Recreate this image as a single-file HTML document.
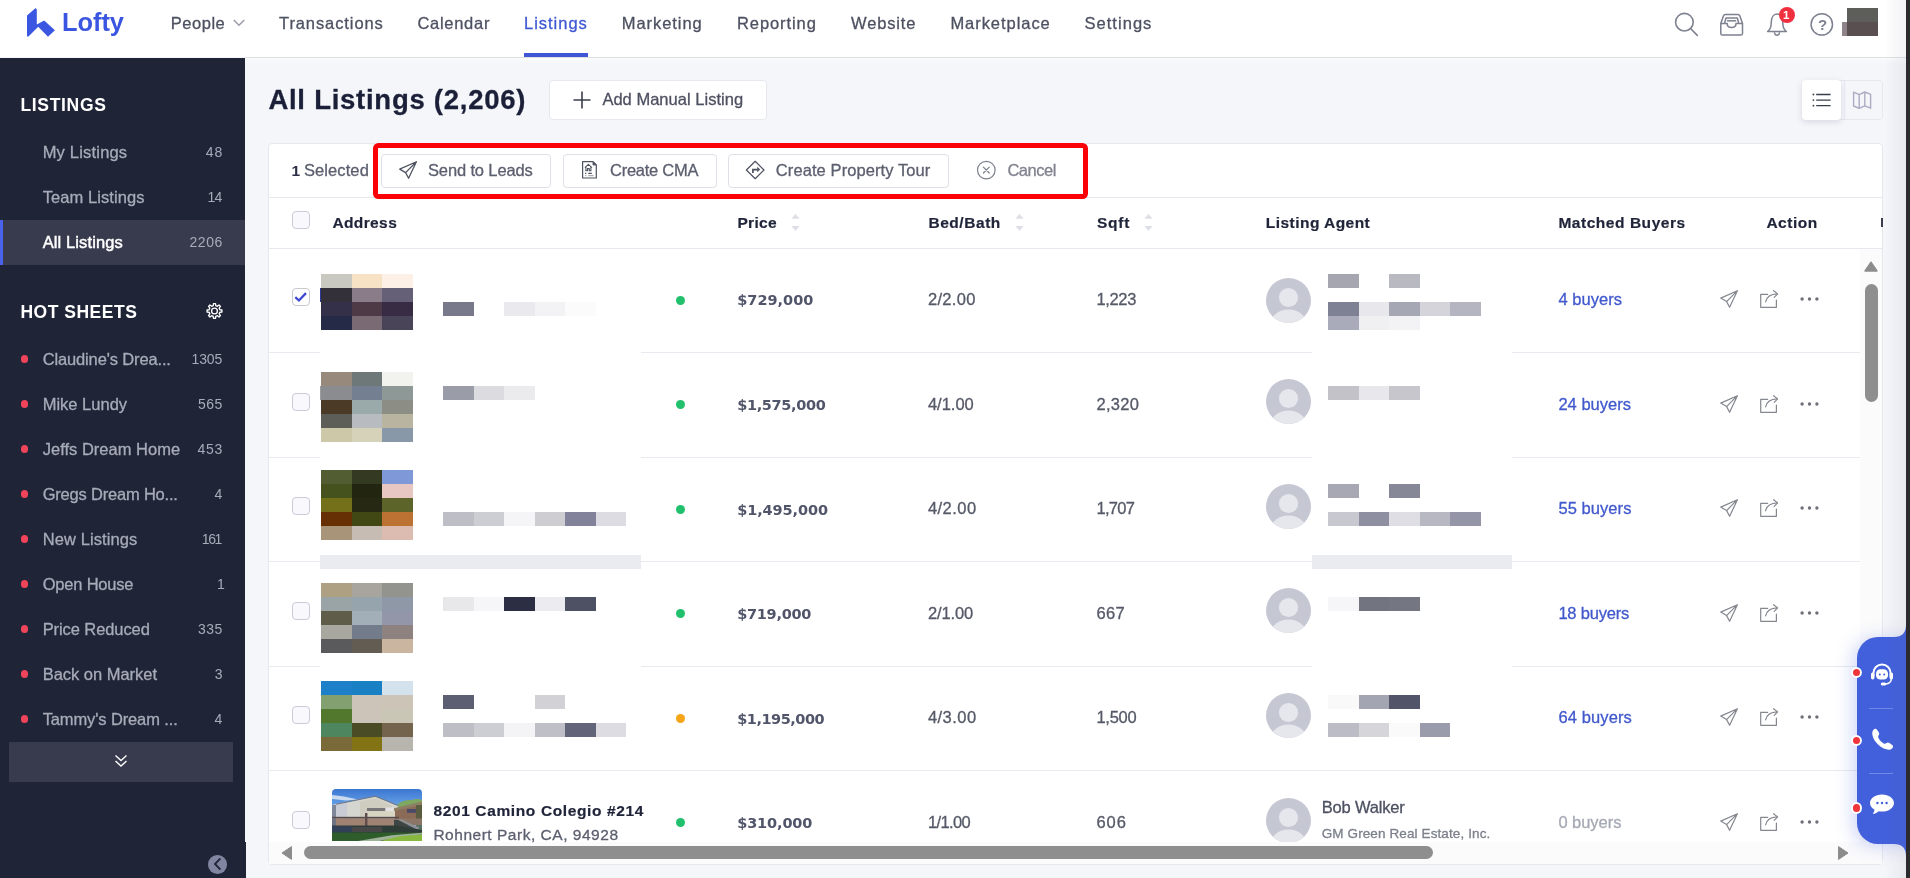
<!DOCTYPE html>
<html lang="en">
<head>
<meta charset="utf-8">
<title>Lofty - All Listings</title>
<style>
html,body{margin:0;padding:0}
body{width:1910px;height:878px;overflow:hidden;background:#f5f6fa;font-family:"Liberation Sans",sans-serif;position:relative}
#p{position:absolute;left:0;top:0;width:1910px;height:878px;overflow:hidden;will-change:transform}
#p>*,.abs{position:absolute}
.t{position:absolute;white-space:nowrap;line-height:1;font-weight:400}
.sw{-webkit-text-stroke:0.3px currentColor}
.sb{-webkit-text-stroke:0.2px currentColor}
.sw2{-webkit-text-stroke:0.45px currentColor}
.dj{font-family:'DejaVu Sans',sans-serif}
i{position:absolute;display:block}
svg{position:absolute;overflow:visible}
.btn{background:#fff;border:1px solid #dfe0e7;border-radius:4px;box-sizing:border-box}
.cb{width:18px;height:18px;box-sizing:border-box;border:1px solid #c9ccd8;border-radius:4px;background:#f8f8fd;left:292px}
.rb{left:269px;width:1591px;height:1px;background:#e9ebf0}
.dot{width:9px;height:9px;border-radius:50%;background:#20c06c;left:676px}
.rd{width:7px;height:8px;border-radius:4px;background:#f0445a;left:20.5px}
</style>
</head>
<body>
<div id="p">
<!-- top nav -->
<div style="left:0;top:0;width:1910px;height:57px;background:#fff"></div>
<div style="left:245px;top:57px;width:1665px;height:1px;background:#dedee3"></div>
<div style="left:245px;top:58px;width:1665px;height:6px;background:linear-gradient(to bottom,rgba(255,255,255,0.55),rgba(255,255,255,0))"></div>
<svg style="left:0;top:0" width="60" height="40" viewBox="0 0 60 40"><path d="M27,15.6 L35.7,8 L36.8,9.4 L36.8,24.5 L44.2,20.4 L54.9,30.2 L48,36.8 L38.2,26.7 L28.5,36.4 L27,36.4 Z" fill="#3b57e2"/></svg>
<svg style="left:233px;top:19px" width="12" height="8" viewBox="0 0 12 8"><path d="M0.8,1 L6,6.2 L11.2,1" fill="none" stroke="#9a9da8" stroke-width="1.5"/></svg>
<div style="left:524px;top:53px;width:64px;height:4px;background:#3f57d3"></div>
<!-- nav icons -->
<svg style="left:1670px;top:8px" width="34" height="32" viewBox="1670 8 34 32" fill="none" stroke="#7d8190" stroke-width="1.6"><circle cx="1684.4" cy="22.2" r="8.8"/><path d="M1690.8,28.7 L1697.3,35.4" stroke-linecap="round"/></svg>
<svg style="left:1716px;top:10px" width="32" height="30" viewBox="1716 10 32 30" fill="none" stroke="#7d8190" stroke-width="1.5" stroke-linejoin="round"><path d="M1720.8,23.4 L1723.6,15.6 Q1724,14.4 1725.3,14.4 H1738 Q1739.2,14.4 1739.7,15.6 L1742.5,23.4"/><path d="M1724.6,23 L1726,18 H1737.3 L1738.7,23"/><path d="M1727,20.8 H1736.2"/><path d="M1720.8,23.4 H1727.2 C1727.2,26 1728.8,27.4 1731.6,27.4 C1734.4,27.4 1736,26 1736,23.4 H1742.5 V33.4 Q1742.5,35 1740.9,35 H1722.4 Q1720.8,35 1720.8,33.4 Z"/></svg>
<svg style="left:1762px;top:8px" width="32" height="32" viewBox="1762 8 32 32" fill="none" stroke="#7d8190" stroke-width="1.5" stroke-linejoin="round"><path d="M1767.6,31.6 C1770.2,29.6 1771.2,27.4 1771.2,23 C1771.2,17.6 1773.6,14 1777,14 C1780.4,14 1782.8,17.6 1782.8,23 C1782.8,27.4 1783.8,29.6 1786.4,31.6 Z"/><path d="M1774.4,32.2 C1774.6,34.2 1775.6,35.2 1777,35.2 C1778.4,35.2 1779.4,34.2 1779.6,32.2"/></svg>
<div style="left:1778.5px;top:7px;width:16px;height:16px;border-radius:50%;background:#f1303f"></div>
<svg style="left:1808px;top:10px" width="30" height="30" viewBox="1808 10 30 30" fill="none" stroke="#7d8190" stroke-width="1.5"><circle cx="1821.8" cy="24.4" r="10.7"/></svg>
<span class="t" style="left:1817.9px;top:17.3px;font-size:15px;color:#7d8190;font-weight:700">?</span>
<i style="left:1847px;top:8px;width:31px;height:14px;background:#5d5e59"></i>
<i style="left:1847px;top:22px;width:31px;height:14px;background:#5a4f50"></i>
<i style="left:1842px;top:22px;width:5px;height:14px;background:#8f8489"></i>

<!-- sidebar -->
<div style="left:0;top:58px;width:245px;height:820px;background:#1f2437"></div>
<div style="left:0;top:842px;width:246px;height:36px;background:#1f2437"></div>
<div style="left:0;top:220px;width:245px;height:45px;background:#383b4d"></div>
<div style="left:0;top:220px;width:3px;height:45px;background:#4a63ea"></div>
<svg style="left:0;top:0" width="245" height="878" viewBox="0 0 245 878"><path d="M221.93,310.00 L221.93,312.00 L219.85,312.28 L219.19,313.87 L220.46,315.55 L219.05,316.96 L217.37,315.69 L215.78,316.35 L215.50,318.43 L213.50,318.43 L213.22,316.35 L211.63,315.69 L209.95,316.96 L208.54,315.55 L209.81,313.87 L209.15,312.28 L207.07,312.00 L207.07,310.00 L209.15,309.72 L209.81,308.13 L208.54,306.45 L209.95,305.04 L211.63,306.31 L213.22,305.65 L213.50,303.57 L215.50,303.57 L215.78,305.65 L217.37,306.31 L219.05,305.04 L220.46,306.45 L219.19,308.13 L219.85,309.72 Z" fill="none" stroke="#fff" stroke-width="1.35" stroke-linejoin="round"/><circle cx="214.5" cy="311" r="2.9" fill="none" stroke="#fff" stroke-width="1.35"/></svg>
<i class="rd" style="top:355px"></i>
<i class="rd" style="top:400px"></i>
<i class="rd" style="top:445px"></i>
<i class="rd" style="top:490px"></i>
<i class="rd" style="top:535px"></i>
<i class="rd" style="top:580px"></i>
<i class="rd" style="top:625px"></i>
<i class="rd" style="top:670px"></i>
<i class="rd" style="top:715px"></i>
<div style="left:9px;top:742px;width:224px;height:40px;background:#383b4d"></div>
<svg style="left:114px;top:754px" width="14" height="14" viewBox="0 0 14 14" fill="none" stroke="#fff" stroke-width="1.4"><path d="M1.5,1.5 L7,6.5 L12.5,1.5 M1.5,7 L7,12 L12.5,7"/></svg>
<div style="left:208.1px;top:855.1px;width:18.6px;height:18.6px;border-radius:50%;background:#8185a0"></div>
<svg style="left:209px;top:855.4px" width="18" height="18" viewBox="0 0 18 18" fill="none" stroke="#22263a" stroke-width="1.9" stroke-linecap="butt" stroke-linejoin="miter"><path d="M11.4,3.4 L6,9 L11.4,14.6"/></svg>

<!-- title row -->
<div class="btn" style="left:549px;top:80px;width:218px;height:40px;border-color:#e6e8ee"></div>
<svg style="left:573px;top:91px" width="18" height="18" viewBox="0 0 18 18" stroke="#3a3e4c" stroke-width="1.6"><path d="M9,0.5 V17.5 M0.5,9 H17.5"/></svg>
<div style="left:1802px;top:80px;width:81px;height:40px;box-sizing:border-box;border:1px solid #e6e8ef;border-radius:4px;background:#f5f6fa"></div>
<div style="left:1844px;top:81px;width:1px;height:38px;background:#e9eaf1"></div>
<div style="left:1802px;top:80px;width:39px;height:40px;border-radius:4px;background:#fff;box-shadow:0 2px 6px rgba(60,70,110,0.16)"></div>
<svg style="left:1808px;top:88px" width="28" height="24" viewBox="1808 88 28 24" stroke="#3a3e4c" stroke-width="1.3" fill="#3a3e4c"><path d="M1816.2,94.5 H1830.6 M1816.2,100.1 H1830.6 M1816.2,105.7 H1830.6" fill="none"/><circle cx="1813.4" cy="94.5" r="0.9" stroke="none"/><circle cx="1813.4" cy="100.1" r="0.9" stroke="none"/><circle cx="1813.4" cy="105.7" r="0.9" stroke="none"/></svg>
<svg style="left:1850px;top:88px" width="24" height="24" viewBox="1850 88 24 24" fill="none" stroke="#a9acc2" stroke-width="1.4" stroke-linejoin="round"><path d="M1853.6,92.2 L1859.2,94.6 L1864.8,92 L1870.6,94.4 V108.2 L1864.8,105.8 L1859.2,108.4 L1853.6,106 Z M1859.2,94.6 V108.4 M1864.8,92 V105.8"/></svg>

<!-- card -->
<div style="left:268px;top:143px;width:1615px;height:722px;box-sizing:border-box;background:#fff;border:1px solid #e6e8ef;border-radius:4px"></div>
<div style="left:269px;top:197px;width:1613px;height:1px;background:#e6e8ee"></div>
<div style="left:269px;top:248px;width:1613px;height:1px;background:#e6e8ee"></div>
<!-- vertical scrollbar track -->
<div style="left:1860px;top:249px;width:22px;height:593px;background:#fbfbfc"></div>
<!-- row borders -->
<div class="rb" style="top:352px"></div>
<div class="rb" style="top:457px"></div>
<div class="rb" style="top:561px"></div>
<div class="rb" style="top:666px"></div>
<div class="rb" style="top:770px"></div>

<!-- selected bar buttons -->
<div class="btn" style="left:381px;top:154px;width:170px;height:34px"></div>
<div class="btn" style="left:563px;top:154px;width:154px;height:34px"></div>
<div class="btn" style="left:728px;top:154px;width:221px;height:34px"></div>
<svg style="left:398.8px;top:161.2px" width="18" height="18" viewBox="0 0 18 18" fill="none" stroke="#4e5260" stroke-width="1.25" stroke-linejoin="round" stroke-linecap="round"><path d="M17.4,0.7 L0.7,8.1 L6.6,11.6 L9.6,17.3 Z M17.4,0.7 L6.6,11.6"/></svg>
<svg style="left:581px;top:160px" width="18" height="20" viewBox="581 160 18 20" fill="none" stroke="#4e5260" stroke-width="1.2" stroke-linejoin="round"><path d="M582.6,161.7 H593 L596.3,165 V178 H582.6 Z"/><path d="M593,161.7 V165 H596.3 Z" fill="#4e5260" stroke-width="0.8"/><path d="M584.9,167.6 L588.4,164.3 L591.9,167.6 M585.9,167 V170.7 H587.5 V168.6 H589.3 V170.7 H590.9 V167" stroke-width="1.1"/><path d="M585,173.4 H586.3 M588.2,173.4 H591.8" stroke-width="1.1"/><path d="M585,175.7 H586.3 M588.2,175.7 H593.6" stroke-width="1" opacity="0.6"/></svg>
<svg style="left:745px;top:160px" width="21" height="21" viewBox="745 160 21 21" fill="none" stroke="#4e5260" stroke-width="1.25" stroke-linejoin="round" stroke-linecap="round"><path d="M755.2,161.3 L764,170 L755.2,178.7 L746.4,170 Z" stroke-width="1.2"/><path d="M752.9,172.9 V169.6 H757.6" stroke-width="1.7" stroke-linecap="butt" stroke-linejoin="miter"/><path d="M757.2,166.8 L760.2,169.6 L757.2,172.3 Z" fill="#4e5260" stroke="none"/></svg>
<svg style="left:976px;top:160px" width="21" height="21" viewBox="976 160 21 21" fill="none" stroke="#7c808c" stroke-width="1.2" stroke-linecap="round"><circle cx="986.3" cy="170.1" r="8.8"/><path d="M983.4,167.2 L989.2,173 M989.2,167.2 L983.4,173"/></svg>
<div style="left:373px;top:143.3px;width:714.5px;height:55.3px;box-sizing:border-box;border:5px solid #fb0007;border-radius:5.5px"></div>

<!-- header checkbox + sort arrows -->
<div class="cb" style="top:211px"></div>
<svg style="left:791px;top:213px" width="9" height="19" viewBox="0 0 9 19" fill="#dfe0e7"><path d="M4.5,0.8 L8.6,5.8 H0.4 Z M4.5,18 L8.6,13 H0.4 Z"/></svg>
<svg style="left:1014.5px;top:213px" width="9" height="19" viewBox="0 0 9 19" fill="#dfe0e7"><path d="M4.5,0.8 L8.6,5.8 H0.4 Z M4.5,18 L8.6,13 H0.4 Z"/></svg>
<svg style="left:1143.6px;top:213px" width="9" height="19" viewBox="0 0 9 19" fill="#dfe0e7"><path d="M4.5,0.8 L8.6,5.8 H0.4 Z M4.5,18 L8.6,13 H0.4 Z"/></svg>
<i style="left:1881px;top:218px;width:1.5px;height:9px;background:#3a3e50"></i>

<!-- mosaic -->
<i style="left:320px;top:250px;width:321px;height:516px;background:#fff"></i>
<i style="left:1312px;top:250px;width:200px;height:516px;background:#fff"></i>
<i style="left:320px;top:555px;width:321px;height:14px;background:#eaeaf1"></i>
<i style="left:1312px;top:555px;width:200px;height:14px;background:#eaeaf1"></i>
<i style="left:321px;top:274px;width:31px;height:14px;background:#c9c9c1"></i>
<i style="left:352px;top:274px;width:30px;height:14px;background:#f7e2c6"></i>
<i style="left:382px;top:274px;width:31px;height:14px;background:#fdf0e6"></i>
<i style="left:321px;top:288px;width:31px;height:14px;background:#34303a"></i>
<i style="left:352px;top:288px;width:30px;height:14px;background:#8a7c88"></i>
<i style="left:382px;top:288px;width:31px;height:14px;background:#655f78"></i>
<i style="left:321px;top:302px;width:31px;height:14px;background:#34304a"></i>
<i style="left:352px;top:302px;width:30px;height:14px;background:#4e3a46"></i>
<i style="left:382px;top:302px;width:31px;height:14px;background:#382c44"></i>
<i style="left:321px;top:316px;width:31px;height:14px;background:#252a46"></i>
<i style="left:352px;top:316px;width:30px;height:14px;background:#7a6a74"></i>
<i style="left:382px;top:316px;width:31px;height:14px;background:#4a4458"></i>
<i style="left:321px;top:372px;width:31px;height:14px;background:#978a7c"></i>
<i style="left:352px;top:372px;width:30px;height:14px;background:#6e7878"></i>
<i style="left:382px;top:372px;width:31px;height:14px;background:#f2f2ee"></i>
<i style="left:321px;top:386px;width:31px;height:14px;background:#8a8c90"></i>
<i style="left:352px;top:386px;width:30px;height:14px;background:#748092"></i>
<i style="left:382px;top:386px;width:31px;height:14px;background:#8e9896"></i>
<i style="left:321px;top:400px;width:31px;height:14px;background:#4a3a26"></i>
<i style="left:352px;top:400px;width:30px;height:14px;background:#9aaaaa"></i>
<i style="left:382px;top:400px;width:31px;height:14px;background:#8c8e86"></i>
<i style="left:321px;top:414px;width:31px;height:14px;background:#5e5e58"></i>
<i style="left:352px;top:414px;width:30px;height:14px;background:#b8bcc0"></i>
<i style="left:382px;top:414px;width:31px;height:14px;background:#b8b4a0"></i>
<i style="left:321px;top:428px;width:31px;height:14px;background:#ccc8a8"></i>
<i style="left:352px;top:428px;width:30px;height:14px;background:#d6d2ba"></i>
<i style="left:382px;top:428px;width:31px;height:14px;background:#8898a8"></i>
<i style="left:321px;top:470px;width:31px;height:14px;background:#525e32"></i>
<i style="left:352px;top:470px;width:30px;height:14px;background:#343a22"></i>
<i style="left:382px;top:470px;width:31px;height:14px;background:#7e98d8"></i>
<i style="left:321px;top:484px;width:31px;height:14px;background:#46521e"></i>
<i style="left:352px;top:484px;width:30px;height:14px;background:#222610"></i>
<i style="left:382px;top:484px;width:31px;height:14px;background:#e8c6c2"></i>
<i style="left:321px;top:498px;width:31px;height:14px;background:#74701a"></i>
<i style="left:352px;top:498px;width:30px;height:14px;background:#262814"></i>
<i style="left:382px;top:498px;width:31px;height:14px;background:#5c642a"></i>
<i style="left:321px;top:512px;width:31px;height:14px;background:#663004"></i>
<i style="left:352px;top:512px;width:30px;height:14px;background:#424814"></i>
<i style="left:382px;top:512px;width:31px;height:14px;background:#bc7232"></i>
<i style="left:321px;top:526px;width:31px;height:14px;background:#a89478"></i>
<i style="left:352px;top:526px;width:30px;height:14px;background:#c6bcb4"></i>
<i style="left:382px;top:526px;width:31px;height:14px;background:#dcbcb0"></i>
<i style="left:321px;top:583px;width:31px;height:14px;background:#aea082"></i>
<i style="left:352px;top:583px;width:30px;height:14px;background:#a8a49e"></i>
<i style="left:382px;top:583px;width:31px;height:14px;background:#94948e"></i>
<i style="left:321px;top:597px;width:31px;height:14px;background:#9aa4a6"></i>
<i style="left:352px;top:597px;width:30px;height:14px;background:#96a4ae"></i>
<i style="left:382px;top:597px;width:31px;height:14px;background:#8e98a6"></i>
<i style="left:321px;top:611px;width:31px;height:14px;background:#605c4a"></i>
<i style="left:352px;top:611px;width:30px;height:14px;background:#a2aeb8"></i>
<i style="left:382px;top:611px;width:31px;height:14px;background:#9296a8"></i>
<i style="left:321px;top:625px;width:31px;height:14px;background:#a8a8a0"></i>
<i style="left:352px;top:625px;width:30px;height:14px;background:#727c8a"></i>
<i style="left:382px;top:625px;width:31px;height:14px;background:#8e8280"></i>
<i style="left:321px;top:639px;width:31px;height:14px;background:#5a5a5c"></i>
<i style="left:352px;top:639px;width:30px;height:14px;background:#635c52"></i>
<i style="left:382px;top:639px;width:31px;height:14px;background:#cab6a0"></i>
<i style="left:321px;top:681px;width:31px;height:14px;background:#1e80c8"></i>
<i style="left:352px;top:681px;width:30px;height:14px;background:#1a80c4"></i>
<i style="left:382px;top:681px;width:31px;height:14px;background:#d4e2ee"></i>
<i style="left:321px;top:695px;width:31px;height:14px;background:#82a070"></i>
<i style="left:352px;top:695px;width:30px;height:14px;background:#ccc4b8"></i>
<i style="left:382px;top:695px;width:31px;height:14px;background:#ccc4b6"></i>
<i style="left:321px;top:709px;width:31px;height:14px;background:#52782e"></i>
<i style="left:352px;top:709px;width:30px;height:14px;background:#ccc4b8"></i>
<i style="left:382px;top:709px;width:31px;height:14px;background:#cac6b6"></i>
<i style="left:321px;top:723px;width:31px;height:14px;background:#4e8660"></i>
<i style="left:352px;top:723px;width:30px;height:14px;background:#4a4c26"></i>
<i style="left:382px;top:723px;width:31px;height:14px;background:#74644e"></i>
<i style="left:321px;top:737px;width:31px;height:14px;background:#7a6a3a"></i>
<i style="left:352px;top:737px;width:30px;height:14px;background:#827414"></i>
<i style="left:382px;top:737px;width:31px;height:14px;background:#b8b4ae"></i>
<i style="left:320px;top:288px;width:1px;height:14px;background:#2c3a9a"></i>
<i style="left:320px;top:386px;width:1px;height:14px;background:#9a9ca0"></i>
<i style="left:443px;top:302px;width:31px;height:14px;background:#787a8c"></i>
<i style="left:504px;top:302px;width:31px;height:14px;background:#e9e9ee"></i>
<i style="left:535px;top:302px;width:30px;height:14px;background:#f3f3f5"></i>
<i style="left:565px;top:302px;width:31px;height:14px;background:#fbfbfb"></i>
<i style="left:443px;top:386px;width:31px;height:14px;background:#9a9ca8"></i>
<i style="left:474px;top:386px;width:30px;height:14px;background:#dcdce0"></i>
<i style="left:504px;top:386px;width:31px;height:14px;background:#ebebee"></i>
<i style="left:443px;top:512px;width:31px;height:14px;background:#bebec6"></i>
<i style="left:474px;top:512px;width:30px;height:14px;background:#cdcdd4"></i>
<i style="left:504px;top:512px;width:31px;height:14px;background:#f5f5f8"></i>
<i style="left:535px;top:512px;width:30px;height:14px;background:#cdcdd2"></i>
<i style="left:565px;top:512px;width:31px;height:14px;background:#82839a"></i>
<i style="left:596px;top:512px;width:30px;height:14px;background:#dcdce2"></i>
<i style="left:443px;top:597px;width:31px;height:14px;background:#e8e8ea"></i>
<i style="left:474px;top:597px;width:30px;height:14px;background:#f6f6f8"></i>
<i style="left:504px;top:597px;width:31px;height:14px;background:#2c2e44"></i>
<i style="left:535px;top:597px;width:30px;height:14px;background:#ececf0"></i>
<i style="left:565px;top:597px;width:31px;height:14px;background:#4e5064"></i>
<i style="left:443px;top:695px;width:31px;height:14px;background:#5c5e72"></i>
<i style="left:535px;top:695px;width:30px;height:14px;background:#d2d2d6"></i>
<i style="left:443px;top:723px;width:31px;height:14px;background:#bebec6"></i>
<i style="left:474px;top:723px;width:30px;height:14px;background:#cdcdd4"></i>
<i style="left:504px;top:723px;width:31px;height:14px;background:#f4f4f6"></i>
<i style="left:535px;top:723px;width:30px;height:14px;background:#bfbfc8"></i>
<i style="left:565px;top:723px;width:31px;height:14px;background:#62647a"></i>
<i style="left:596px;top:723px;width:30px;height:14px;background:#dcdce2"></i>
<i style="left:1328px;top:274px;width:31px;height:14px;background:#a6a6b0"></i>
<i style="left:1389px;top:274px;width:31px;height:14px;background:#b9b9c2"></i>
<i style="left:1328px;top:302px;width:31px;height:14px;background:#7e8094"></i>
<i style="left:1359px;top:302px;width:30px;height:14px;background:#e8e8ec"></i>
<i style="left:1389px;top:302px;width:31px;height:14px;background:#a6a7b4"></i>
<i style="left:1420px;top:302px;width:30px;height:14px;background:#d4d4da"></i>
<i style="left:1450px;top:302px;width:31px;height:14px;background:#b4b5c0"></i>
<i style="left:1328px;top:316px;width:31px;height:14px;background:#aaabba"></i>
<i style="left:1359px;top:316px;width:30px;height:14px;background:#f0f0f3"></i>
<i style="left:1389px;top:316px;width:31px;height:14px;background:#f3f3f5"></i>
<i style="left:1328px;top:386px;width:31px;height:14px;background:#c2c2c8"></i>
<i style="left:1359px;top:386px;width:30px;height:14px;background:#e8e8ec"></i>
<i style="left:1389px;top:386px;width:31px;height:14px;background:#c6c6cc"></i>
<i style="left:1328px;top:484px;width:31px;height:14px;background:#a8a8b4"></i>
<i style="left:1389px;top:484px;width:31px;height:14px;background:#868898"></i>
<i style="left:1328px;top:512px;width:31px;height:14px;background:#c8c8d0"></i>
<i style="left:1359px;top:512px;width:30px;height:14px;background:#8e90a2"></i>
<i style="left:1389px;top:512px;width:31px;height:14px;background:#dedee4"></i>
<i style="left:1420px;top:512px;width:30px;height:14px;background:#b8b8c2"></i>
<i style="left:1450px;top:512px;width:31px;height:14px;background:#9496a8"></i>
<i style="left:1328px;top:597px;width:31px;height:14px;background:#f6f6f8"></i>
<i style="left:1359px;top:597px;width:30px;height:14px;background:#72747f"></i>
<i style="left:1389px;top:597px;width:31px;height:14px;background:#747682"></i>
<i style="left:1328px;top:695px;width:31px;height:14px;background:#f9f9fa"></i>
<i style="left:1359px;top:695px;width:30px;height:14px;background:#a4a5b2"></i>
<i style="left:1389px;top:695px;width:31px;height:14px;background:#52556a"></i>
<i style="left:1328px;top:723px;width:31px;height:14px;background:#bcbcc6"></i>
<i style="left:1359px;top:723px;width:30px;height:14px;background:#d6d6da"></i>
<i style="left:1389px;top:723px;width:31px;height:14px;background:#fafafa"></i>
<i style="left:1420px;top:723px;width:30px;height:14px;background:#9a9cac"></i>

<!-- row widgets -->
<div class="cb" style="top:288px;background:#fff;border-color:#c9c9d0"></div>
<svg style="left:292px;top:288px" width="18" height="18" viewBox="0 0 18 18" fill="none" stroke="#3f47d2" stroke-width="2.3" stroke-linecap="butt" stroke-linejoin="miter"><path d="M3.3,9.2 L6.9,12.5 L14,5.1"/></svg>
<i class="dot" style="top:295.8px;background:#20c06c"></i>
<svg style="left:1266px;top:277.5px;overflow:hidden" width="45" height="45" viewBox="0 0 45 45"><defs><clipPath id="av300"><circle cx="22.5" cy="22.5" r="22.5"/></clipPath></defs><g clip-path="url(#av300)"><rect width="45" height="45" fill="#c5c7d3"/><circle cx="22.5" cy="19.5" r="9.6" fill="#e6e7ec"/><ellipse cx="22.5" cy="45" rx="17.5" ry="13.5" fill="#e6e7ec"/></g></svg>
<svg style="left:1719.8px;top:290px" width="18" height="18" viewBox="0 0 18 18" fill="none" stroke="#85878f" stroke-width="1.2" stroke-linejoin="round" stroke-linecap="round"><path d="M17.4,0.7 L0.7,8.1 L6.6,11.6 L9.6,17.3 Z M17.4,0.7 L6.6,11.6"/></svg>
<svg style="left:1759.6px;top:290px" width="19" height="18" viewBox="0 0 19 18" fill="none" stroke="#85878f" stroke-width="1.2" stroke-linejoin="round" stroke-linecap="round"><path d="M7.6,4.4 H0.7 V17.3 H16.4 V10.2"/><path d="M5.6,11.8 C6.6,7.4 10.4,4.2 17.2,3.9"/><path d="M13.6,0.7 L17.6,3.9 L14.2,7.4"/></svg>
<svg style="left:1800.2px;top:297.2px" width="20" height="4" viewBox="0 0 20 4" fill="#6e7077"><circle cx="2.1" cy="2" r="1.7"/><circle cx="9.5" cy="2" r="1.7"/><circle cx="16.9" cy="2" r="1.7"/></svg>
<div class="cb" style="top:393px"></div>
<i class="dot" style="top:400.3px;background:#20c06c"></i>
<svg style="left:1266px;top:379.0px;overflow:hidden" width="45" height="45" viewBox="0 0 45 45"><defs><clipPath id="av401"><circle cx="22.5" cy="22.5" r="22.5"/></clipPath></defs><g clip-path="url(#av401)"><rect width="45" height="45" fill="#c5c7d3"/><circle cx="22.5" cy="19.5" r="9.6" fill="#e6e7ec"/><ellipse cx="22.5" cy="45" rx="17.5" ry="13.5" fill="#e6e7ec"/></g></svg>
<svg style="left:1719.8px;top:394.5px" width="18" height="18" viewBox="0 0 18 18" fill="none" stroke="#85878f" stroke-width="1.2" stroke-linejoin="round" stroke-linecap="round"><path d="M17.4,0.7 L0.7,8.1 L6.6,11.6 L9.6,17.3 Z M17.4,0.7 L6.6,11.6"/></svg>
<svg style="left:1759.6px;top:394.5px" width="19" height="18" viewBox="0 0 19 18" fill="none" stroke="#85878f" stroke-width="1.2" stroke-linejoin="round" stroke-linecap="round"><path d="M7.6,4.4 H0.7 V17.3 H16.4 V10.2"/><path d="M5.6,11.8 C6.6,7.4 10.4,4.2 17.2,3.9"/><path d="M13.6,0.7 L17.6,3.9 L14.2,7.4"/></svg>
<svg style="left:1800.2px;top:401.7px" width="20" height="4" viewBox="0 0 20 4" fill="#6e7077"><circle cx="2.1" cy="2" r="1.7"/><circle cx="9.5" cy="2" r="1.7"/><circle cx="16.9" cy="2" r="1.7"/></svg>
<div class="cb" style="top:497px"></div>
<i class="dot" style="top:504.8px;background:#20c06c"></i>
<svg style="left:1266px;top:484.0px;overflow:hidden" width="45" height="45" viewBox="0 0 45 45"><defs><clipPath id="av506"><circle cx="22.5" cy="22.5" r="22.5"/></clipPath></defs><g clip-path="url(#av506)"><rect width="45" height="45" fill="#c5c7d3"/><circle cx="22.5" cy="19.5" r="9.6" fill="#e6e7ec"/><ellipse cx="22.5" cy="45" rx="17.5" ry="13.5" fill="#e6e7ec"/></g></svg>
<svg style="left:1719.8px;top:499px" width="18" height="18" viewBox="0 0 18 18" fill="none" stroke="#85878f" stroke-width="1.2" stroke-linejoin="round" stroke-linecap="round"><path d="M17.4,0.7 L0.7,8.1 L6.6,11.6 L9.6,17.3 Z M17.4,0.7 L6.6,11.6"/></svg>
<svg style="left:1759.6px;top:499px" width="19" height="18" viewBox="0 0 19 18" fill="none" stroke="#85878f" stroke-width="1.2" stroke-linejoin="round" stroke-linecap="round"><path d="M7.6,4.4 H0.7 V17.3 H16.4 V10.2"/><path d="M5.6,11.8 C6.6,7.4 10.4,4.2 17.2,3.9"/><path d="M13.6,0.7 L17.6,3.9 L14.2,7.4"/></svg>
<svg style="left:1800.2px;top:506.2px" width="20" height="4" viewBox="0 0 20 4" fill="#6e7077"><circle cx="2.1" cy="2" r="1.7"/><circle cx="9.5" cy="2" r="1.7"/><circle cx="16.9" cy="2" r="1.7"/></svg>
<div class="cb" style="top:602px"></div>
<i class="dot" style="top:609.3px;background:#20c06c"></i>
<svg style="left:1266px;top:588.0px;overflow:hidden" width="45" height="45" viewBox="0 0 45 45"><defs><clipPath id="av610"><circle cx="22.5" cy="22.5" r="22.5"/></clipPath></defs><g clip-path="url(#av610)"><rect width="45" height="45" fill="#c5c7d3"/><circle cx="22.5" cy="19.5" r="9.6" fill="#e6e7ec"/><ellipse cx="22.5" cy="45" rx="17.5" ry="13.5" fill="#e6e7ec"/></g></svg>
<svg style="left:1719.8px;top:603.5px" width="18" height="18" viewBox="0 0 18 18" fill="none" stroke="#85878f" stroke-width="1.2" stroke-linejoin="round" stroke-linecap="round"><path d="M17.4,0.7 L0.7,8.1 L6.6,11.6 L9.6,17.3 Z M17.4,0.7 L6.6,11.6"/></svg>
<svg style="left:1759.6px;top:603.5px" width="19" height="18" viewBox="0 0 19 18" fill="none" stroke="#85878f" stroke-width="1.2" stroke-linejoin="round" stroke-linecap="round"><path d="M7.6,4.4 H0.7 V17.3 H16.4 V10.2"/><path d="M5.6,11.8 C6.6,7.4 10.4,4.2 17.2,3.9"/><path d="M13.6,0.7 L17.6,3.9 L14.2,7.4"/></svg>
<svg style="left:1800.2px;top:610.7px" width="20" height="4" viewBox="0 0 20 4" fill="#6e7077"><circle cx="2.1" cy="2" r="1.7"/><circle cx="9.5" cy="2" r="1.7"/><circle cx="16.9" cy="2" r="1.7"/></svg>
<div class="cb" style="top:706px"></div>
<i class="dot" style="top:713.7px;background:#f5a516"></i>
<svg style="left:1266px;top:693.0px;overflow:hidden" width="45" height="45" viewBox="0 0 45 45"><defs><clipPath id="av715"><circle cx="22.5" cy="22.5" r="22.5"/></clipPath></defs><g clip-path="url(#av715)"><rect width="45" height="45" fill="#c5c7d3"/><circle cx="22.5" cy="19.5" r="9.6" fill="#e6e7ec"/><ellipse cx="22.5" cy="45" rx="17.5" ry="13.5" fill="#e6e7ec"/></g></svg>
<svg style="left:1719.8px;top:708px" width="18" height="18" viewBox="0 0 18 18" fill="none" stroke="#85878f" stroke-width="1.2" stroke-linejoin="round" stroke-linecap="round"><path d="M17.4,0.7 L0.7,8.1 L6.6,11.6 L9.6,17.3 Z M17.4,0.7 L6.6,11.6"/></svg>
<svg style="left:1759.6px;top:708px" width="19" height="18" viewBox="0 0 19 18" fill="none" stroke="#85878f" stroke-width="1.2" stroke-linejoin="round" stroke-linecap="round"><path d="M7.6,4.4 H0.7 V17.3 H16.4 V10.2"/><path d="M5.6,11.8 C6.6,7.4 10.4,4.2 17.2,3.9"/><path d="M13.6,0.7 L17.6,3.9 L14.2,7.4"/></svg>
<svg style="left:1800.2px;top:715.2px" width="20" height="4" viewBox="0 0 20 4" fill="#6e7077"><circle cx="2.1" cy="2" r="1.7"/><circle cx="9.5" cy="2" r="1.7"/><circle cx="16.9" cy="2" r="1.7"/></svg>
<div class="cb" style="top:811px"></div>
<i class="dot" style="top:818.2px;background:#20c06c"></i>
<svg style="left:1266px;top:797.5px;overflow:hidden" width="45" height="44.5" viewBox="0 0 45 44.5"><defs><clipPath id="av820"><circle cx="22.5" cy="22.5" r="22.5"/></clipPath></defs><g clip-path="url(#av820)"><rect width="45" height="45" fill="#c5c7d3"/><circle cx="22.5" cy="19.5" r="9.6" fill="#e6e7ec"/><ellipse cx="22.5" cy="45" rx="17.5" ry="13.5" fill="#e6e7ec"/></g></svg>
<svg style="left:1719.8px;top:812.5px" width="18" height="18" viewBox="0 0 18 18" fill="none" stroke="#85878f" stroke-width="1.2" stroke-linejoin="round" stroke-linecap="round"><path d="M17.4,0.7 L0.7,8.1 L6.6,11.6 L9.6,17.3 Z M17.4,0.7 L6.6,11.6"/></svg>
<svg style="left:1759.6px;top:812.5px" width="19" height="18" viewBox="0 0 19 18" fill="none" stroke="#85878f" stroke-width="1.2" stroke-linejoin="round" stroke-linecap="round"><path d="M7.6,4.4 H0.7 V17.3 H16.4 V10.2"/><path d="M5.6,11.8 C6.6,7.4 10.4,4.2 17.2,3.9"/><path d="M13.6,0.7 L17.6,3.9 L14.2,7.4"/></svg>
<svg style="left:1800.2px;top:819.7px" width="20" height="4" viewBox="0 0 20 4" fill="#6e7077"><circle cx="2.1" cy="2" r="1.7"/><circle cx="9.5" cy="2" r="1.7"/><circle cx="16.9" cy="2" r="1.7"/></svg>
<svg style="left:332px;top:789px;overflow:hidden" width="90" height="52" viewBox="0 0 90 52"><defs><clipPath id="ph"><path d="M4,0 H86 Q90,0 90,4 V52 H0 V4 Q0,0 4,0 Z"/></clipPath><linearGradient id="sky" x1="0" y1="0" x2="0" y2="1"><stop offset="0" stop-color="#3b76d2"/><stop offset="0.35" stop-color="#6aa6e8"/><stop offset="1" stop-color="#8fc0ee"/></linearGradient><filter id="bl" x="-5%" y="-5%" width="110%" height="110%"><feGaussianBlur stdDeviation="0.55"/></filter></defs><g clip-path="url(#ph)"><rect width="90" height="52" fill="url(#sky)"/><g filter="url(#bl)"><path d="M0,6 L12,7.5 L26,10.5 L14,11.5 L0,10 Z" fill="#dfe9f4" opacity="0.85"/><path d="M64,17 Q70,10 80,11 Q86,9 90,11 V22 H64 Z" fill="#7ea862"/><path d="M0,16 L4,15 L15,13 L43.3,7.3 L66,16.6 L66,30 L0,30 Z" fill="#d6d6d0"/><path d="M4,15 L15,13 L15,29 L4,29 Z" fill="#c9ccd4"/><path d="M0,16 H4 V29 H0 Z" fill="#7f8898"/><path d="M28,12.5 L43.3,9.5 L60,16.5 L60,19 L35,19 L35,28 L28,28 Z" fill="#cfcdbf"/><path d="M3.9,15.2 L15,13 L43.3,7.3 L66,16.6" fill="none" stroke="#6e7684" stroke-width="1.1"/><rect x="35" y="19" width="18.5" height="3.2" fill="#77777a"/><rect x="53.5" y="18.5" width="8" height="4" fill="#e4e2e0"/><rect x="34.9" y="22.2" width="29.5" height="5.4" fill="#d8d4c2"/><path d="M63,19.5 L90,13.5 V32 H63 Z" fill="#8c6a58"/><path d="M62,19.2 L90,12.6 V15.8 L62,22 Z" fill="#8e7e62"/><rect x="75" y="20" width="9" height="3.8" fill="#4b4a68"/><rect x="84" y="16" width="6" height="26" fill="#4a5a3a" opacity="0.75"/><rect x="0" y="27.8" width="67" height="1.9" fill="#544c4e"/><rect x="0" y="29.5" width="4" height="8" fill="#6c7280"/><rect x="3.9" y="29.5" width="58" height="7.6" fill="#a08272"/><rect x="33" y="24" width="2.4" height="14" fill="#5e4c4c"/><path d="M62,29.5 L90,29.5 V36 L62,36 Z" fill="#8a7466"/><path d="M65.5,30.5 L69,30 L87,38.4 L86,41 Z" fill="#8f9092"/><path d="M62,31 L66,31 L86,41 L86,44 L62,40 Z" fill="#3e4444"/><path d="M0,36.6 H64 L90,41 V45 H0 Z" fill="#2f3c38"/><rect x="0" y="37" width="20" height="7" fill="#32405e" opacity="0.8"/><rect x="20" y="38" width="30" height="5" fill="#5a4e5a" opacity="0.55"/><path d="M0,43.6 H90 V52 H0 Z" fill="#2f5c2b"/><path d="M50,52 L62,47 L90,45.5 V52 Z" fill="#86b93e"/><path d="M26,52 L60,46.2 L90,43.8 V45.6 L66,47.6 L48,52 Z" fill="#9fb29a"/></g></g></svg>

<!-- horizontal scrollbar -->
<div style="left:269px;top:842px;width:1613px;height:22px;background:#fbfbfc"></div>
<svg style="left:280px;top:845px" width="14" height="16" viewBox="0 0 14 16"><path d="M11.5,1.6 L2,8 L11.5,14.4 Z" fill="#8c8c8c" stroke="#8c8c8c" stroke-width="1" stroke-linejoin="round"/></svg>
<svg style="left:1835.5px;top:845px" width="14" height="16" viewBox="0 0 14 16"><path d="M2.5,1.6 L12,8 L2.5,14.4 Z" fill="#8c8c8c" stroke="#8c8c8c" stroke-width="1" stroke-linejoin="round"/></svg>
<div style="left:304px;top:846px;width:1129px;height:13px;border-radius:7px;background:#8e8e8e"></div>
<!-- vertical scrollbar -->
<svg style="left:1863px;top:260px" width="16" height="13" viewBox="0 0 16 13"><path d="M8,2.2 L14,11 H2 Z" fill="#8c8c8c" stroke="#8c8c8c" stroke-width="1.4" stroke-linejoin="round"/></svg>
<div style="left:1865px;top:284px;width:13px;height:118px;border-radius:7px;background:#8e8e8e"></div>

<div style="left:1857px;top:637px;width:60px;height:206.5px;border-radius:21px 0 0 21px;background:#4260db;box-shadow:-4px 2px 18px rgba(63,90,216,0.26)"></div>
<svg style="left:1894px;top:625px" width="12" height="12" viewBox="0 0 12 12"><path d="M12,0 V12 H0 Q12,12 12,0 Z" fill="#4260db"/></svg>
<svg style="left:1894px;top:843.5px" width="12" height="12" viewBox="0 0 12 12"><path d="M12,12 V0 H0 Q12,0 12,12 Z" fill="#4260db"/></svg>
<div style="left:1869px;top:708px;width:24px;height:1px;background:#7088e8"></div>
<div style="left:1869px;top:773px;width:24px;height:1px;background:#7088e8"></div>
<div style="left:1852.7px;top:668.7px;width:7.6px;height:7.6px;border-radius:50%;background:#f0353a;box-shadow:0 0 0 1.9px #fff"></div>
<div style="left:1852.7px;top:736.5px;width:7.6px;height:7.6px;border-radius:50%;background:#f0353a;box-shadow:0 0 0 1.9px #fff"></div>
<div style="left:1852.7px;top:804.2px;width:7.6px;height:7.6px;border-radius:50%;background:#f0353a;box-shadow:0 0 0 1.9px #fff"></div>
<svg style="left:1869px;top:662px" width="26" height="26" viewBox="-13 -13 26 26" fill="none" stroke="#fff" stroke-linecap="round"><path d="M-8.6,1 V-2 A8.6,8.6 0 0 1 8.6,-2 V1" stroke-width="2"/><rect x="-11" y="-2.6" width="3.4" height="7" rx="1.6" fill="#fff" stroke="none"/><rect x="7.6" y="-2.6" width="3.4" height="7" rx="1.6" fill="#fff" stroke="none"/><rect x="-6" y="-5.8" width="12" height="10.4" rx="4.4" fill="#fff" stroke="none"/><circle cx="-2.2" cy="-0.4" r="1" fill="#4260db" stroke="none"/><circle cx="2.2" cy="-0.4" r="1" fill="#4260db" stroke="none"/><path d="M9.4,4 Q9,8.6 3.6,9" stroke-width="1.6"/><rect x="-1.2" y="7.4" width="5.4" height="3.2" rx="1.6" fill="#fff" stroke="none"/></svg>
<svg style="left:1869px;top:727px" width="26" height="26" viewBox="-13 -13 26 26"><path d="M-9.6,-8.2 C-10.4,-4 -7.4,1.6 -3.4,5 C0.4,8.4 5.4,10.4 8.6,9.4 C10.2,8.8 11.4,7.2 11,6 C10.6,5 7.4,2.8 6.2,2.6 C5,2.4 4,4 2.6,3.8 C0.4,3.2 -3.2,-0.6 -3.8,-2.8 C-4.2,-4.2 -2.6,-5 -2.8,-6.4 C-3,-7.6 -5.2,-10.8 -6.2,-11.2 C-7.6,-11.6 -9.2,-10 -9.6,-8.2 Z" fill="#fff"/></svg>
<svg style="left:1868px;top:791px" width="28" height="26" viewBox="-14 -13 28 26"><path d="M0,-9.6 C6.8,-9.6 12,-5.8 12,-1 C12,3.8 6.8,7.6 0,7.6 C-1.2,7.6 -2.4,7.5 -3.4,7.2 C-5,8.8 -7.4,9.8 -9.4,9.8 C-8,8.6 -7.6,7 -7.6,5.6 C-10.4,4 -12,1.6 -12,-1 C-12,-5.8 -6.8,-9.6 0,-9.6 Z" fill="#fff"/><circle cx="-4.6" cy="-1" r="1.2" fill="#4260db"/><circle cx="0" cy="-1" r="1.2" fill="#4260db"/><circle cx="4.6" cy="-1" r="1.2" fill="#4260db"/></svg>

<!-- texts -->
<span class="t" style="left:62.0px;top:9.8px;font-size:25.4px;color:#3a56e0;font-weight:700;letter-spacing:-0.02px;">Lofty</span>
<span class="t sw" style="left:170.8px;top:14.8px;font-size:16.5px;color:#4d5161;letter-spacing:0.52px;">People</span>
<span class="t sw" style="left:279.0px;top:14.8px;font-size:16.5px;color:#4d5161;letter-spacing:0.91px;">Transactions</span>
<span class="t sw" style="left:417.4px;top:14.8px;font-size:16.5px;color:#4d5161;letter-spacing:0.72px;">Calendar</span>
<span class="t sw" style="left:524.0px;top:14.8px;font-size:16.5px;color:#3f57d3;letter-spacing:0.98px;">Listings</span>
<span class="t sw" style="left:621.8px;top:14.8px;font-size:16.5px;color:#4d5161;letter-spacing:0.94px;">Marketing</span>
<span class="t sw" style="left:737.0px;top:14.8px;font-size:16.5px;color:#4d5161;letter-spacing:0.91px;">Reporting</span>
<span class="t sw" style="left:851.0px;top:14.8px;font-size:16.5px;color:#4d5161;letter-spacing:0.85px;">Website</span>
<span class="t sw" style="left:950.4px;top:14.8px;font-size:16.5px;color:#4d5161;letter-spacing:0.95px;">Marketplace</span>
<span class="t sw" style="left:1084.4px;top:14.8px;font-size:16.5px;color:#4d5161;letter-spacing:1.05px;">Settings</span>
<span class="t" style="left:20.4px;top:96.7px;font-size:17.5px;color:#ffffff;font-weight:700;letter-spacing:0.69px;">LISTINGS</span>
<span class="t sw" style="left:42.7px;top:144.2px;font-size:16.5px;color:#a8abb8;letter-spacing:0.19px;">My Listings</span>
<span class="t" style="left:205.7px;top:145.0px;font-size:14px;color:#a8abb8;letter-spacing:1.12px;">48</span>
<span class="t sw" style="left:42.7px;top:189.2px;font-size:16.5px;color:#a8abb8;letter-spacing:0.07px;">Team Listings</span>
<span class="t" style="left:207.4px;top:190.0px;font-size:14px;color:#a8abb8;letter-spacing:-0.58px;">14</span>
<span class="t sw2" style="left:42.7px;top:233.9px;font-size:16.5px;color:#ffffff;letter-spacing:0.11px;">All Listings</span>
<span class="t" style="left:189.4px;top:235.0px;font-size:14px;color:#a8abb8;letter-spacing:0.61px;">2206</span>
<span class="t" style="left:20.4px;top:303.7px;font-size:17.5px;color:#ffffff;font-weight:700;letter-spacing:0.51px;">HOT SHEETS</span>
<span class="t sw" style="left:42.7px;top:351.2px;font-size:16.5px;color:#a8abb8;letter-spacing:-0.14px;">Claudine's Drea...</span>
<span class="t" style="left:191.4px;top:352.0px;font-size:14px;color:#a8abb8;letter-spacing:-0.05px;">1305</span>
<span class="t sw" style="left:42.7px;top:396.2px;font-size:16.5px;color:#a8abb8;">Mike Lundy</span>
<span class="t" style="left:197.9px;top:397.0px;font-size:14px;color:#a8abb8;letter-spacing:0.57px;">565</span>
<span class="t sw" style="left:42.7px;top:441.2px;font-size:16.5px;color:#a8abb8;letter-spacing:0.01px;">Jeffs Dream Home</span>
<span class="t" style="left:197.4px;top:442.0px;font-size:14px;color:#a8abb8;letter-spacing:0.82px;">453</span>
<span class="t sw" style="left:42.7px;top:486.2px;font-size:16.5px;color:#a8abb8;letter-spacing:-0.2px;">Gregs Dream Ho...</span>
<span class="t" style="left:214.4px;top:487.0px;font-size:14px;color:#a8abb8;">4</span>
<span class="t sw" style="left:42.7px;top:531.2px;font-size:16.5px;color:#a8abb8;letter-spacing:0.1px;">New Listings</span>
<span class="t" style="left:201.8px;top:532.0px;font-size:14px;color:#a8abb8;letter-spacing:-1.38px;">161</span>
<span class="t sw" style="left:42.7px;top:576.2px;font-size:16.5px;color:#a8abb8;letter-spacing:-0.2px;">Open House</span>
<span class="t" style="left:217.1px;top:577.0px;font-size:14px;color:#a8abb8;">1</span>
<span class="t sw" style="left:42.7px;top:621.2px;font-size:16.5px;color:#a8abb8;letter-spacing:-0.09px;">Price Reduced</span>
<span class="t" style="left:197.9px;top:622.0px;font-size:14px;color:#a8abb8;letter-spacing:0.57px;">335</span>
<span class="t sw" style="left:42.7px;top:666.2px;font-size:16.5px;color:#a8abb8;letter-spacing:-0.02px;">Back on Market</span>
<span class="t" style="left:214.7px;top:667.0px;font-size:14px;color:#a8abb8;">3</span>
<span class="t sw" style="left:42.7px;top:711.2px;font-size:16.5px;color:#a8abb8;letter-spacing:-0.12px;">Tammy's Dream ...</span>
<span class="t" style="left:214.4px;top:712.0px;font-size:14px;color:#a8abb8;">4</span>
<span class="t sw" style="left:268.4px;top:85.6px;font-size:27.5px;color:#1b2038;font-weight:700;letter-spacing:0.74px;">All Listings (2,206)</span>
<span class="t sw" style="left:602.4px;top:91.2px;font-size:16.5px;color:#4d5161;letter-spacing:0.02px;">Add Manual Listing</span>
<span class="t" style="left:291.4px;top:163.4px;font-size:15.5px;color:#2a2f45;font-weight:700;">1</span>
<span class="t sw" style="left:303.9px;top:162.2px;font-size:16.5px;color:#5b5f6e;letter-spacing:0.1px;">Selected</span>
<span class="t sw" style="left:428.0px;top:162.2px;font-size:16.5px;color:#5b5f6e;letter-spacing:-0.14px;">Send to Leads</span>
<span class="t sw" style="left:610.0px;top:162.2px;font-size:16.5px;color:#5b5f6e;letter-spacing:-0.26px;">Create CMA</span>
<span class="t sw" style="left:775.8px;top:162.2px;font-size:16.5px;color:#5b5f6e;letter-spacing:0.09px;">Create Property Tour</span>
<span class="t sw" style="left:1007.4px;top:162.2px;font-size:16.5px;color:#80838f;letter-spacing:-0.47px;">Cancel</span>
<span class="t sb" style="left:332.4px;top:215.2px;font-size:15.5px;color:#1f2439;font-weight:700;letter-spacing:0.39px;">Address</span>
<span class="t sb" style="left:737.4px;top:215.2px;font-size:15.5px;color:#1f2439;font-weight:700;letter-spacing:0.32px;">Price</span>
<span class="t sb" style="left:928.4px;top:215.2px;font-size:15.5px;color:#1f2439;font-weight:700;letter-spacing:0.56px;">Bed/Bath</span>
<span class="t sb" style="left:1097.0px;top:215.2px;font-size:15.5px;color:#1f2439;font-weight:700;letter-spacing:0.75px;">Sqft</span>
<span class="t sb" style="left:1265.8px;top:215.2px;font-size:15.5px;color:#1f2439;font-weight:700;letter-spacing:0.46px;">Listing Agent</span>
<span class="t sb" style="left:1558.4px;top:215.2px;font-size:15.5px;color:#1f2439;font-weight:700;letter-spacing:0.54px;">Matched Buyers</span>
<span class="t sb" style="left:1766.4px;top:215.2px;font-size:15.5px;color:#1f2439;font-weight:700;letter-spacing:0.52px;">Action</span>
<span class="t dj" style="left:737.2px;top:293.3px;font-size:14.5px;color:#51556a;font-weight:700;letter-spacing:0.01px;">$729,000</span>
<span class="t sw" style="left:927.9px;top:290.7px;font-size:16.5px;color:#555967;letter-spacing:0.33px;">2/2.00</span>
<span class="t sw" style="left:1096.4px;top:290.7px;font-size:16.5px;color:#555967;letter-spacing:-0.32px;">1,223</span>
<span class="t sw" style="left:1558.4px;top:290.7px;font-size:16.5px;color:#4159cc;letter-spacing:0.06px;">4 buyers</span>
<span class="t dj" style="left:737.2px;top:398.1px;font-size:14.5px;color:#51556a;font-weight:700;letter-spacing:-0.35px;">$1,575,000</span>
<span class="t sw" style="left:927.9px;top:395.5px;font-size:16.5px;color:#555967;">4/1.00</span>
<span class="t sw" style="left:1096.4px;top:395.5px;font-size:16.5px;color:#555967;letter-spacing:0.33px;">2,320</span>
<span class="t sw" style="left:1558.4px;top:395.5px;font-size:16.5px;color:#4159cc;letter-spacing:0.03px;">24 buyers</span>
<span class="t dj" style="left:737.2px;top:502.5px;font-size:14.5px;color:#51556a;font-weight:700;letter-spacing:-0.09px;">$1,495,000</span>
<span class="t sw" style="left:927.9px;top:499.9px;font-size:16.5px;color:#555967;letter-spacing:0.47px;">4/2.00</span>
<span class="t sw" style="left:1096.4px;top:499.9px;font-size:16.5px;color:#555967;letter-spacing:-0.67px;">1,707</span>
<span class="t sw" style="left:1558.4px;top:499.9px;font-size:16.5px;color:#4159cc;letter-spacing:0.07px;">55 buyers</span>
<span class="t dj" style="left:737.2px;top:607.2px;font-size:14.5px;color:#51556a;font-weight:700;letter-spacing:-0.28px;">$719,000</span>
<span class="t sw" style="left:927.9px;top:604.6px;font-size:16.5px;color:#555967;letter-spacing:-0.13px;">2/1.00</span>
<span class="t sw" style="left:1096.4px;top:604.6px;font-size:16.5px;color:#555967;letter-spacing:0.33px;">667</span>
<span class="t sw" style="left:1558.4px;top:604.6px;font-size:16.5px;color:#4159cc;letter-spacing:-0.21px;">18 buyers</span>
<span class="t dj" style="left:737.2px;top:711.5px;font-size:14.5px;color:#51556a;font-weight:700;letter-spacing:-0.47px;">$1,195,000</span>
<span class="t sw" style="left:927.9px;top:708.9px;font-size:16.5px;color:#555967;letter-spacing:0.47px;">4/3.00</span>
<span class="t sw" style="left:1096.4px;top:708.9px;font-size:16.5px;color:#555967;letter-spacing:-0.25px;">1,500</span>
<span class="t sw" style="left:1558.4px;top:708.9px;font-size:16.5px;color:#4159cc;letter-spacing:0.12px;">64 buyers</span>
<span class="t dj" style="left:737.2px;top:816.4px;font-size:14.5px;color:#51556a;font-weight:700;letter-spacing:-0.13px;">$310,000</span>
<span class="t sw" style="left:927.9px;top:813.8px;font-size:16.5px;color:#555967;letter-spacing:-0.6px;">1/1.00</span>
<span class="t sw" style="left:1096.4px;top:813.8px;font-size:16.5px;color:#555967;letter-spacing:0.98px;">606</span>
<span class="t sw" style="left:1558.4px;top:813.8px;font-size:16.5px;color:#a6a9b5;letter-spacing:-0.04px;">0 buyers</span>
<span class="t sb" style="left:433.4px;top:803.2px;font-size:15.5px;color:#1f2439;font-weight:700;letter-spacing:0.63px;">8201 Camino Colegio #214</span>
<span class="t sw" style="left:433.4px;top:826.6px;font-size:15.5px;color:#5b5f6e;letter-spacing:0.52px;">Rohnert Park, CA, 94928</span>
<span class="t sw" style="left:1321.7px;top:799.2px;font-size:16.5px;color:#4d5161;letter-spacing:-0.17px;">Bob Walker</span>
<span class="t sw" style="left:1321.7px;top:826.7px;font-size:13.5px;color:#7c808c;letter-spacing:0.11px;">GM Green Real Estate, Inc.</span>
<span class="t" style="left:1783.0px;top:10.1px;font-size:11.5px;color:#ffffff;font-weight:700;">1</span>

<!-- right edge -->
<div style="left:1884px;top:0;width:22px;height:878px;background:linear-gradient(to right,rgba(90,95,120,0),rgba(90,95,120,0.08))"></div>
<div style="left:1906px;top:0;width:4px;height:878px;background:#2b2b2e"></div>
</div>
</body>
</html>
